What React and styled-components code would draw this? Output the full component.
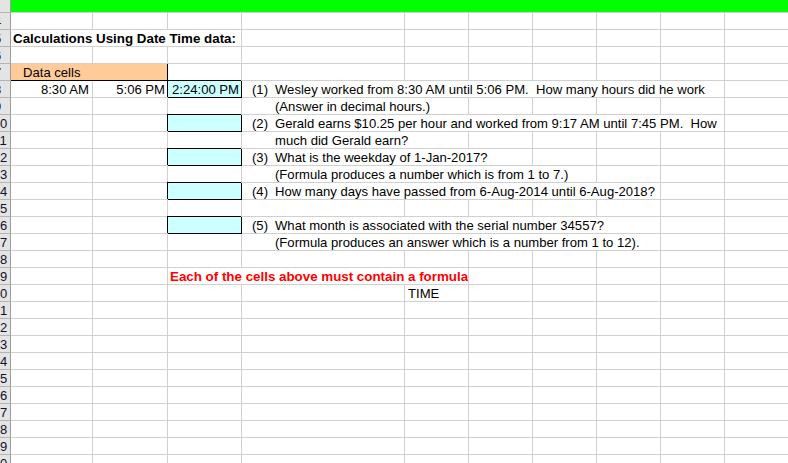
import React from 'react';
import styled, { createGlobalStyle, css } from 'styled-components';

const GlobalStyle = createGlobalStyle`
  html, body {
    margin: 0;
    padding: 0;
    overflow: hidden;
    background: #ffffff;
  }

  body {
    font-family: "Liberation Sans", Arial, sans-serif;
    font-size: 13.1px;
    color: #000000;
  }
`;

const COLUMNS = 10;

const StyledSheet = styled.div`
  display: grid;
  grid-template-columns: 11px 82px 75px 74px 163px repeat(6, 64px);
  grid-template-rows: 13px;
  grid-auto-rows: 17px;
  width: 788px;
  height: 463px;
  overflow: hidden;
`;

const StyledRowHead = styled.div`
  display: flex;
  justify-content: flex-start;
  box-sizing: border-box;
  overflow: hidden;

  border-right: 1px solid #9c9c9c;
  border-bottom: 1px solid #b4b4b4;
  background-color: #e4e4e4;

  font-size: 13px;
  line-height: 16px;
  padding-top: 1px;
  color: #101030;
`;

const StyledRowLabel = styled.span`
  flex: none;
  width: 20px;
  margin-left: ${({ $single }) => ($single ? -12.5 : -10)}px;
  text-align: center;
`;

const StyledCell = styled.div`
  grid-column: span ${({ $span }) => $span || 1};
  box-sizing: border-box;
  overflow: hidden;
  white-space: pre;

  border-right: 1px solid ${({ $noRight }) => ($noRight ? 'transparent' : '#d0d0d0')};
  border-bottom: 1px solid #d0d0d0;
  background-color: ${({ $fill }) => $fill || '#ffffff'};

  padding: 1px ${({ $padRight }) => $padRight ?? 2}px 0 ${({ $padLeft }) => $padLeft ?? 2}px;
  line-height: 16px;
  text-align: ${({ $align }) => $align || 'left'};
  font-weight: ${({ $bold }) => ($bold ? 'bold' : 'normal')};
  font-size: ${({ $bold }) => ($bold ? '13.35px' : 'inherit')};
  color: ${({ $color }) => $color || '#000000'};

  ${({ $boxed }) =>
    $boxed &&
    css`
      border-right-color: #000000;
      border-bottom-color: #000000;
      box-shadow: -1px -1px 0 0 #000000;
    `}

  ${({ $edged }) =>
    $edged &&
    css`
      border-right-color: #000000;
      border-bottom-color: #000000;
    `}
`;

const StyledNum = styled.span`
  display: inline-block;
  width: 23px;
`;

const Question = ({ num, children }) => (
  <>
    <StyledNum>{num ? `(${num})` : ''}</StyledNum>
    {children}
  </>
);

const CYAN = '#ccffff';

// row number -> list of cells (col is 1-based: A = 1)
const rows = {
  3: [{ col: 1, span: 10, fill: '#00ff00', noRight: true }],
  5: [{ col: 1, span: 3, bold: true, text: 'Calculations Using Date Time data:' }],
  7: [{ col: 1, span: 2, fill: '#ffcc99', padLeft: 12, edged: true, text: 'Data cells' }],
  8: [
    { col: 1, align: 'right', padRight: 3, text: '8:30 AM' },
    { col: 2, align: 'right', text: '5:06 PM' },
    { col: 3, align: 'right', fill: CYAN, boxed: true, text: '2:24:00 PM' },
    {
      col: 4,
      span: 6,
      padLeft: 10,
      text: <Question num={1}>Wesley worked from 8:30 AM until 5:06 PM.  How many hours did he work</Question>,
    },
  ],
  9: [{ col: 4, span: 2, padLeft: 10, text: <Question>(Answer in decimal hours.)</Question> }],
  10: [
    { col: 3, fill: CYAN, boxed: true },
    {
      col: 4,
      span: 6,
      padLeft: 10,
      text: <Question num={2}>Gerald earns $10.25 per hour and worked from 9:17 AM until 7:45 PM.  How</Question>,
    },
  ],
  11: [{ col: 4, span: 2, padLeft: 10, text: <Question>much did Gerald earn?</Question> }],
  12: [
    { col: 3, fill: CYAN, boxed: true },
    { col: 4, span: 3, padLeft: 10, text: <Question num={3}>What is the weekday of 1-Jan-2017?</Question> },
  ],
  13: [
    {
      col: 4,
      span: 4,
      padLeft: 10,
      text: <Question>(Formula produces a number which is from 1 to 7.)</Question>,
    },
  ],
  14: [
    { col: 3, fill: CYAN, boxed: true },
    {
      col: 4,
      span: 5,
      padLeft: 10,
      text: <Question num={4}>How many days have passed from 6-Aug-2014 until 6-Aug-2018?</Question>,
    },
  ],
  16: [
    { col: 3, fill: CYAN, boxed: true },
    {
      col: 4,
      span: 5,
      padLeft: 10,
      text: <Question num={5}>What month is associated with the serial number 34557?</Question>,
    },
  ],
  17: [
    {
      col: 4,
      span: 5,
      padLeft: 10,
      text: <Question>(Formula produces an answer which is a number from 1 to 12).</Question>,
    },
  ],
  19: [
    {
      col: 3,
      span: 3,
      bold: true,
      color: '#ff0000',
      text: 'Each of the cells above must contain a formula',
    },
  ],
  20: [{ col: 5, padLeft: 3, text: 'TIME' }],
};

const buildRow = (rowNumber) => {
  const specs = rows[rowNumber] || [];
  const cells = [];
  let col = 1;

  while (col <= COLUMNS) {
    const spec = specs.find((item) => item.col === col);

    if (spec) {
      cells.push(
        <StyledCell
          key={col}
          $span={spec.span}
          $fill={spec.fill}
          $align={spec.align}
          $bold={spec.bold}
          $color={spec.color}
          $boxed={spec.boxed}
          $edged={spec.edged}
          $noRight={spec.noRight}
          $padLeft={spec.padLeft}
          $padRight={spec.padRight}
        >
          {spec.text}
        </StyledCell>
      );
      col += spec.span || 1;
    } else {
      cells.push(<StyledCell key={col} />);
      col += 1;
    }
  }

  return cells;
};

const rowNumbers = Array.from({ length: 28 }, (_, index) => index + 3);

export default function App() {
  return (
    <>
      <GlobalStyle />
      <StyledSheet>
        {rowNumbers.map((rowNumber) => (
          <React.Fragment key={rowNumber}>
            <StyledRowHead>
              <StyledRowLabel $single={rowNumber < 10}>{rowNumber === 3 ? '' : rowNumber}</StyledRowLabel>
            </StyledRowHead>
            {buildRow(rowNumber)}
          </React.Fragment>
        ))}
      </StyledSheet>
    </>
  );
}
